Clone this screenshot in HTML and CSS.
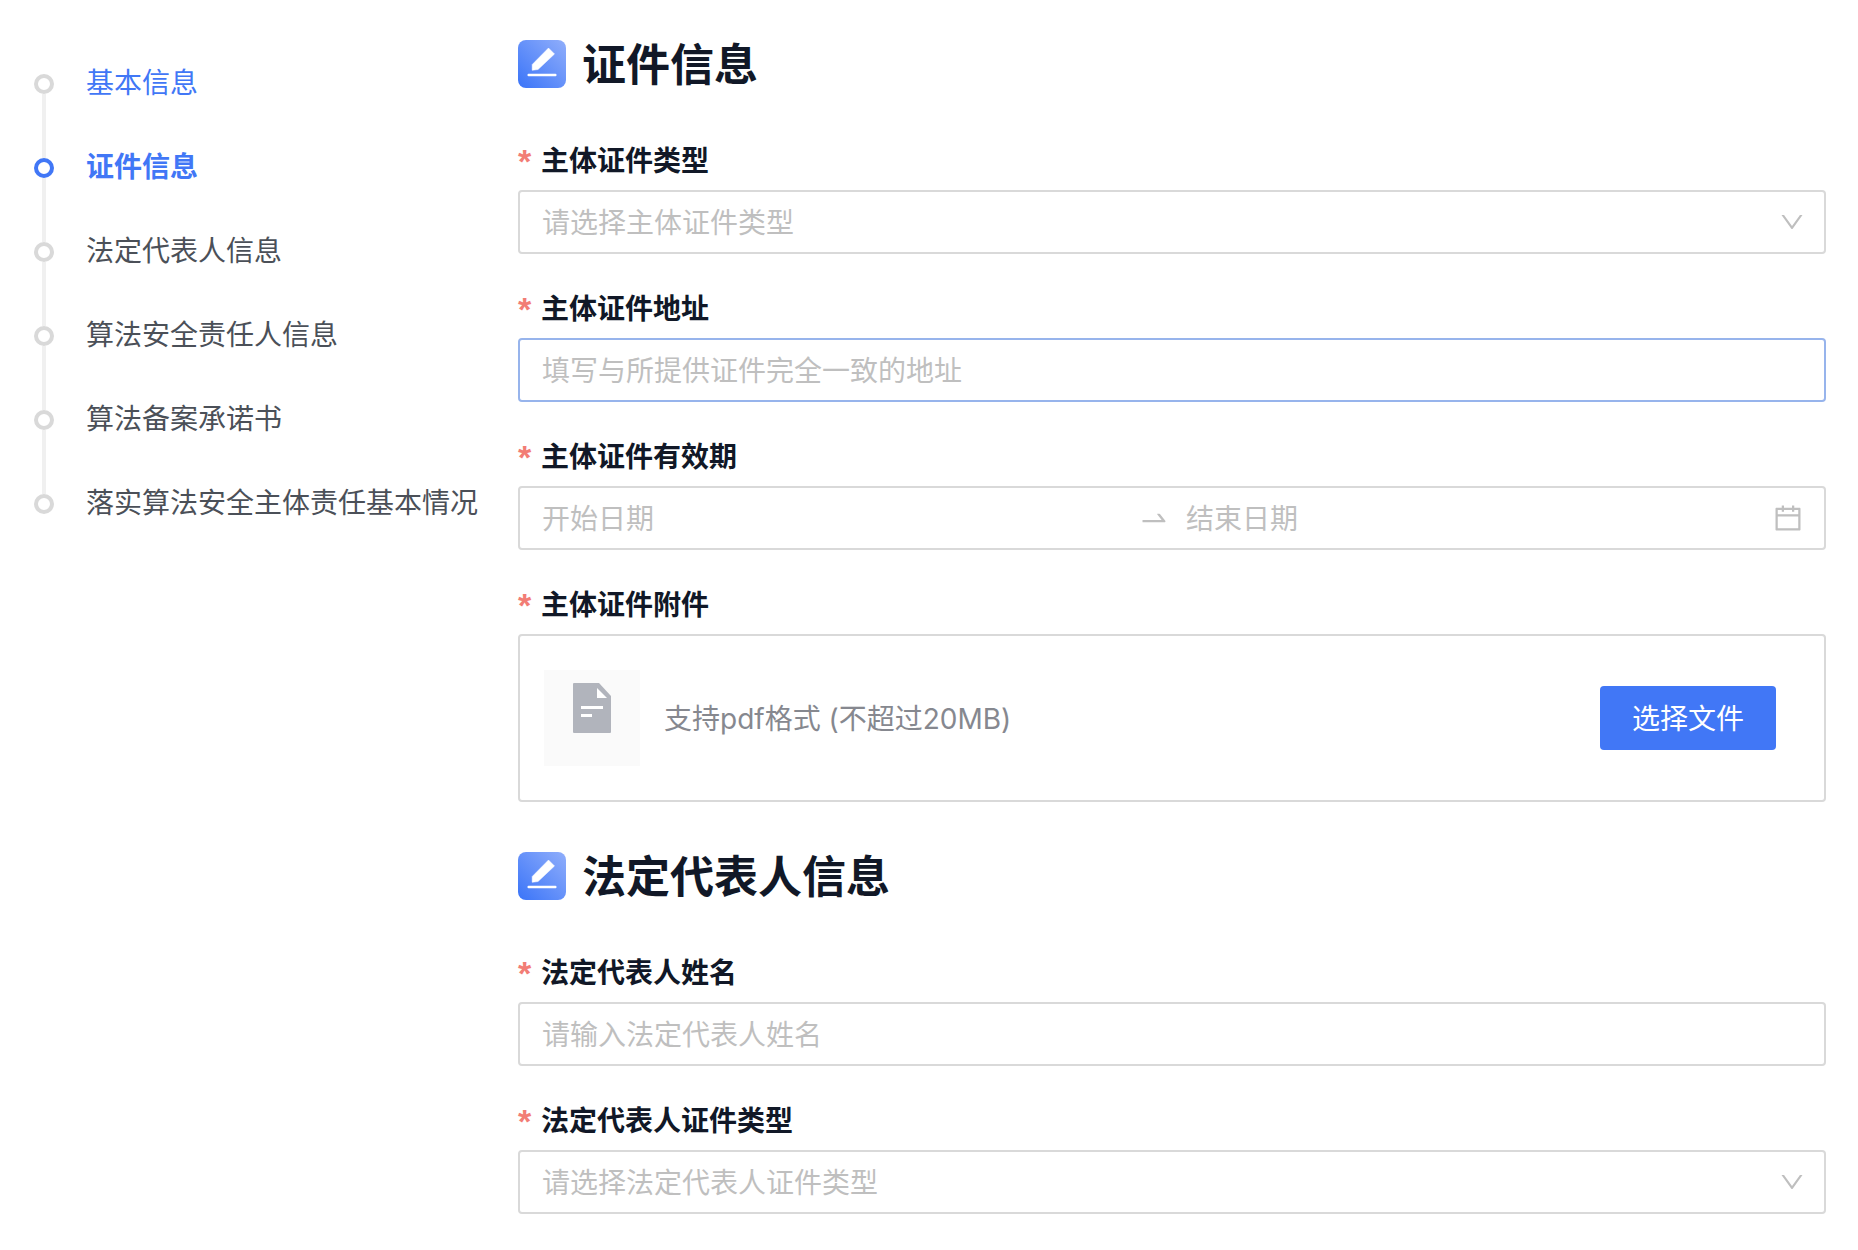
FILE: index.html
```
<!DOCTYPE html>
<html lang="zh-CN">
<head>
<meta charset="UTF-8">
<meta name="viewport" content="width=device-width, initial-scale=1.0">
<title>主体信息填报</title>
<link rel="stylesheet" href="styles.css">
</head>
<body>

<!-- 公用图标 -->
<svg class="icon-defs" width="0" height="0" aria-hidden="true">
  <defs>
    <linearGradient id="editBg" x1="0" y1="1" x2="1" y2="0">
      <stop offset="0" stop-color="#3a74f8"/>
      <stop offset="1" stop-color="#90aefb"/>
    </linearGradient>
    <symbol id="icon-edit" viewBox="0 0 48 48">
      <rect width="48" height="48" rx="8" fill="url(#editBg)"/>
      <path d="M30.500 8L36.500 14L20 29.500L14.200 30.300V24.500Z" fill="#fff" stroke="#fff" stroke-width="0.5" stroke-linejoin="round"/>
      <rect x="9.500" y="33.700" width="29" height="2.600" rx="1" fill="#fff"/>
    </symbol>
    <symbol id="icon-down" viewBox="0 0 1024 1024">
      <path d="M884 256h-75c-5.1 0-9.9 2.5-12.9 6.6L512 654.2 227.9 262.6c-3-4.1-7.8-6.6-12.9-6.6h-75c-6.5 0-10.3 7.4-6.5 12.7l352.6 486.1c12.8 17.6 39 17.6 51.7 0l352.6-486.1c3.9-5.3.1-12.7-6.4-12.7z"/>
    </symbol>
  </defs>
</svg>

<div class="layout">
  <nav class="steps">
    <ul>
      <li class="step done"><a href="#base">基本信息</a></li>
      <li class="step active"><a href="#cert">证件信息</a></li>
      <li class="step"><a href="#legal">法定代表人信息</a></li>
      <li class="step"><a href="#duty">算法安全责任人信息</a></li>
      <li class="step"><a href="#promise">算法备案承诺书</a></li>
      <li class="step"><a href="#status">落实算法安全主体责任基本情况</a></li>
    </ul>
  </nav>

  <form class="form">
    <section id="cert">
      <h2 class="title"><svg class="title-icon" aria-hidden="true"><use href="#icon-edit"/></svg>证件信息</h2>

      <div class="item">
        <label class="label" for="certType">主体证件类型</label>
        <div class="select">
          <select id="certType" class="control">
            <option value="">请选择主体证件类型</option>
          </select>
          <svg class="arrow" aria-hidden="true"><use href="#icon-down"/></svg>
        </div>
      </div>

      <div class="item">
        <label class="label" for="certAddress">主体证件地址</label>
        <input id="certAddress" class="control hover" type="text" placeholder="填写与所提供证件完全一致的地址">
      </div>

      <div class="item">
        <label class="label" for="certStart">主体证件有效期</label>
        <div class="control range">
          <input id="certStart" type="text" placeholder="开始日期">
          <svg class="range-icon range-sep" viewBox="0 0 1024 1024" aria-hidden="true">
            <path d="M873.1 596.2l-164-208A32 32 0 00684 376h-64.8c-6.7 0-10.4 7.7-6.3 13l144.3 183H152c-4.4 0-8 3.6-8 8v60c0 4.4 3.6 8 8 8h695.9c26.8 0 41.7-30.8 25.2-51.8z"/>
          </svg>
          <input type="text" placeholder="结束日期" aria-label="结束日期">
          <svg class="range-icon range-date" viewBox="0 0 1024 1024" aria-hidden="true">
            <path d="M880 184H712v-64c0-4.4-3.6-8-8-8h-56c-4.4 0-8 3.6-8 8v64H384v-64c0-4.4-3.6-8-8-8h-56c-4.4 0-8 3.6-8 8v64H144c-17.7 0-32 14.3-32 32v664c0 17.7 14.3 32 32 32h736c17.7 0 32-14.3 32-32V216c0-17.7-14.3-32-32-32zm-40 656H184V460h656v380zM184 392V256h128v48c0 4.4 3.6 8 8 8h56c4.4 0 8-3.6 8-8v-48h256v48c0 4.4 3.6 8 8 8h56c4.4 0 8-3.6 8-8v-48h128v136H184z"/>
          </svg>
        </div>
      </div>

      <div class="item">
        <label class="label" for="certFile">主体证件附件</label>
        <div class="upload">
          <div class="file-icon">
            <svg viewBox="0 0 38 50" aria-hidden="true">
              <path d="M1 0H26L38 13V49a1 1 0 0 1-1 1H1a1 1 0 0 1-1-1V1a1 1 0 0 1 1-1z" fill="#b1b4bc"/>
              <path d="M24 5V15H34Z" fill="#fff"/>
              <path d="M8 23H30V26H8zM8 31H19V34H8z" fill="#fff"/>
            </svg>
          </div>
          <span class="upload-tip">支持pdf格式 (不超过20MB)</span>
          <button id="certFile" class="btn" type="button">选择文件</button>
        </div>
      </div>
    </section>

    <section id="legal">
      <h2 class="title"><svg class="title-icon" aria-hidden="true"><use href="#icon-edit"/></svg>法定代表人信息</h2>

      <div class="item">
        <label class="label" for="legalName">法定代表人姓名</label>
        <input id="legalName" class="control" type="text" placeholder="请输入法定代表人姓名">
      </div>

      <div class="item">
        <label class="label" for="legalType">法定代表人证件类型</label>
        <div class="select">
          <select id="legalType" class="control">
            <option value="">请选择法定代表人证件类型</option>
          </select>
          <svg class="arrow" aria-hidden="true"><use href="#icon-down"/></svg>
        </div>
      </div>
    </section>
  </form>
</div>

</body>
</html>
```
FILE: styles.css
```
*,
*::before,
*::after {
  box-sizing: border-box;
}

body {
  margin: 0;
  background-color: #fff;
  color: #111827;
  font-family: Inter, "Noto Sans CJK SC", sans-serif;
  font-size: 28px;
  line-height: 46px;
}

input,
select,
button {
  font: inherit;
}

.icon-defs {
  position: absolute;
}

.layout {
  display: flex;
  align-items: flex-start;
  gap: 40px;
  padding: 40px 32px 32px 34px;
}

/* 左侧步骤 */
.steps {
  flex: none;
  padding-top: 20px;
}

.steps ul {
  margin: 0;
  padding: 0;
  list-style: none;
}

.step {
  position: relative;
  padding: 0 0 38px 52px;
}

.step::before {
  content: "";
  position: absolute;
  top: 14px;
  left: 0;
  width: 20px;
  height: 20px;
  border: 4px solid #d9d9d9;
  border-radius: 50%;
}

/* 连接线 */
.step:not(:last-child)::after {
  content: "";
  position: absolute;
  top: 34px;
  bottom: -14px;
  left: 8px;
  width: 4px;
  background-color: #f0f0f0;
}

.step a {
  color: #4b5058;
  text-decoration: none;
}

.step.done a,
.step.active a {
  color: #4177f6;
}

.step.active a {
  font-weight: 600;
}

.step.active::before {
  border-color: #4177f6;
}

/* 表单 */
.form {
  flex: 1;
  min-width: 0;
}

.title {
  display: flex;
  align-items: center;
  gap: 16px;
  margin: 0 0 48px;
  font-size: 44px;
  font-weight: 600;
  line-height: 50px;
}

.title-icon {
  width: 48px;
  height: 48px;
  margin-bottom: 2px;
}

.item {
  margin-bottom: 32px;
}

section .item:last-child {
  margin-bottom: 50px;
}

.label {
  display: flex;
  margin-bottom: 6px;
  font-weight: 600;
}

.label::before {
  content: "*";
  width: 23px;
  color: #f27d75;
  font-family: "Liberation Sans", sans-serif;
  font-size: 34px;
}

.control {
  display: block;
  width: 100%;
  height: 64px;
  padding: 2px 22px 0;
  border: 2px solid #d9d9d9;
  border-radius: 4px;
  outline: none;
  background-color: #fff;
  color: #bfbfbf;
}

.control.hover {
  border-color: #97b4ec;
}

input::placeholder {
  color: #bfbfbf;
  opacity: 1;
}

.select {
  position: relative;
}

.select select {
  appearance: none;
}

.arrow {
  position: absolute;
  top: 18px;
  right: 20px;
  width: 28px;
  height: 28px;
  fill: #bfbfbf;
  pointer-events: none;
}

.range {
  display: flex;
  align-items: center;
  padding: 0 20px 0 22px;
}

.range input {
  flex: 1;
  min-width: 0;
  padding: 2px 0 0;
  border: none;
  outline: none;
}

.range-icon {
  flex: none;
  width: 32px;
  height: 32px;
  fill: #bfbfbf;
}

.range-sep {
  margin: 0 16px;
}

.range-date {
  margin-left: 6px;
}

.upload {
  display: flex;
  align-items: center;
  gap: 24px;
  padding: 34px 48px 34px 24px;
  border: 2px solid #d9d9d9;
  border-radius: 4px;
}

.file-icon {
  display: flex;
  align-items: center;
  justify-content: center;
  width: 96px;
  height: 96px;
  padding-bottom: 20px;
  background-color: #fafafa;
}

.file-icon svg {
  width: 38px;
  height: 50px;
}

.upload-tip {
  flex: 1;
  padding-top: 2px;
  color: #86888f;
}

.btn {
  height: 64px;
  padding: 2px 32px 0;
  border: none;
  border-radius: 4px;
  background-color: #4177f6;
  color: #fff;
  cursor: pointer;
}
```
